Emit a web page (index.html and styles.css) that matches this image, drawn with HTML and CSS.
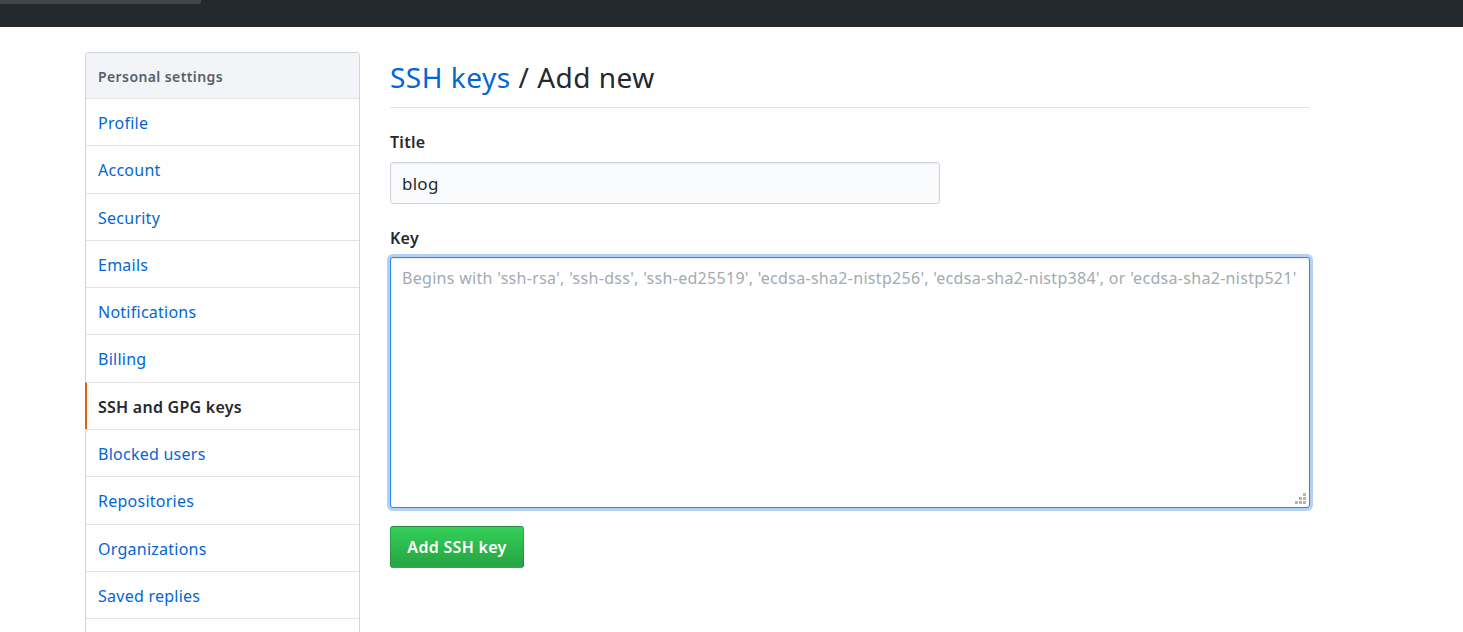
FILE: index.html
```html
<!DOCTYPE html>
<html>
<head>
<meta charset="utf-8">
<link rel="stylesheet" href="styles.css">
</head>
<body>
<header class="topbar"><div class="tab"></div></header>
<div class="container">
  <nav class="sidebar">
    <div class="menu-heading">Personal settings</div>
    <a class="menu-item">Profile</a>
    <a class="menu-item">Account</a>
    <a class="menu-item">Security</a>
    <a class="menu-item">Emails</a>
    <a class="menu-item">Notifications</a>
    <a class="menu-item">Billing</a>
    <a class="menu-item selected">SSH and GPG keys</a>
    <a class="menu-item">Blocked users</a>
    <a class="menu-item">Repositories</a>
    <a class="menu-item">Organizations</a>
    <a class="menu-item">Saved replies</a>
    <a class="menu-item"></a>
  </nav>
  <main class="main">
    <h2 class="subhead"><a class="link">SSH keys</a> / Add new</h2>
    <div class="form-group">
      <label class="label">Title</label>
      <input class="input title-input" type="text" value="blog">
    </div>
    <div class="form-group">
      <label class="label">Key</label>
      <div class="textarea-wrap">
        <textarea class="input key-input" placeholder="Begins with 'ssh-rsa', 'ssh-dss', 'ssh-ed25519', 'ecdsa-sha2-nistp256', 'ecdsa-sha2-nistp384', or 'ecdsa-sha2-nistp521'"></textarea>
        <svg class="grip" width="11" height="11" viewBox="0 0 11 11">
          <rect x="8" y="0" width="3" height="3" fill="#b4b4b4"/>
          <rect x="4" y="4" width="3" height="3" fill="#b4b4b4"/>
          <rect x="8" y="4" width="3" height="3" fill="#b4b4b4"/>
          <rect x="0" y="8" width="3" height="3" fill="#b4b4b4"/>
          <rect x="4" y="8" width="3" height="3" fill="#b4b4b4"/>
          <rect x="8" y="8" width="3" height="3" fill="#b4b4b4"/>
        </svg>
      </div>
    </div>
    <button class="btn">Add SSH key</button>
  </main>
</div>
</body>
</html>
```
FILE: styles.css
```css
html, body {
  margin: 0;
  padding: 0;
  background: #fff;
  font-family: "Noto Sans", "Open Sans", sans-serif;
  color: #24292e;
  overflow: hidden;
  height: 632px;
  letter-spacing: 0.25px;
}
.topbar {
  height: 27px;
  background: #24292e;
}
.tab {
  width: 201px;
  height: 4px;
  background: #40474f;
  border-bottom-right-radius: 3px;
}
.container {
  display: flex;
  gap: 30px;
  padding-left: 85px;
  margin-top: 25px;
}
.sidebar {
  width: 273px;
  border: 1px solid #d1d5da;
  border-radius: 3px;
  display: flex;
  flex-direction: column;
  flex-shrink: 0;
}
.menu-heading {
  height: 45px;
  line-height: 48px;
  padding-left: 12px;
  background: #f3f4f7;
  color: #586069;
  font-size: 14px;
  font-weight: 600;
  letter-spacing: 0.4px;
  border-radius: 3px 3px 0 0;
}
.menu-item {
  display: block;
  height: 46.3px;
  line-height: 48px;
  border-top: 1px solid #e1e4e8;
  padding-left: 12px;
  font-size: 16px;
  color: #0366d6;
}
.menu-item.selected {
  color: #24292e;
  font-weight: 600;
  border-left: 2px solid #e36209;
  margin-left: -1px;
  padding-left: 11px;
}
.main {
  width: 920px;
}
.subhead {
  margin: 0;
  padding-top: 8px;
  height: 35px;
  line-height: 35px;
  padding-bottom: 12px;
  border-bottom: 1px solid #e1e4e8;
  font-size: 28px;
  font-weight: 400;
  letter-spacing: 0.5px;
}
.link {
  color: #0366d6;
}
.form-group {
  margin-top: 22px;
}
.label {
  display: block;
  font-size: 16px;
  font-weight: 600;
  line-height: 24px;
  margin-bottom: 8px;
}
.input {
  box-sizing: border-box;
  font-family: inherit;
  letter-spacing: inherit;
  border: 1px solid #d1d5da;
  border-radius: 3px;
  background: #fafbfc;
  color: #24292e;
  outline: none;
  box-shadow: inset 0 1px 2px rgba(27,31,35,0.075);
}
.title-input {
  display: block;
  width: 550px;
  height: 42px;
  padding: 0 11px;
  font-size: 17px;
}
.textarea-wrap {
  position: relative;
  margin-top: -1px;
}
.key-input {
  display: block;
  width: 920px;
  height: 251px;
  padding: 8px 11px;
  font-size: 16px;
  line-height: 24px;
  letter-spacing: 0.3px;
  background: #fff;
  border: 1px solid #2188ff;
  box-shadow: inset 0 1px 2px rgba(27,31,35,0.075), 0 0 0 3px rgba(3,102,214,0.3);
  resize: none;
}
.key-input::placeholder {
  color: #a3aab1;
}
.grip {
  position: absolute;
  right: 4px;
  bottom: 4px;
}
.btn {
  display: block;
  margin-top: 18px;
  height: 42px;
  width: 134px;
  border: 1px solid rgba(27,31,35,0.2);
  border-radius: 3px;
  background: linear-gradient(-180deg, #34d058 0%, #28a745 90%);
  color: #fff;
  font-family: inherit;
  font-size: 16px;
  font-weight: 600;
  letter-spacing: 0.3px;
  padding: 0;
}
```
